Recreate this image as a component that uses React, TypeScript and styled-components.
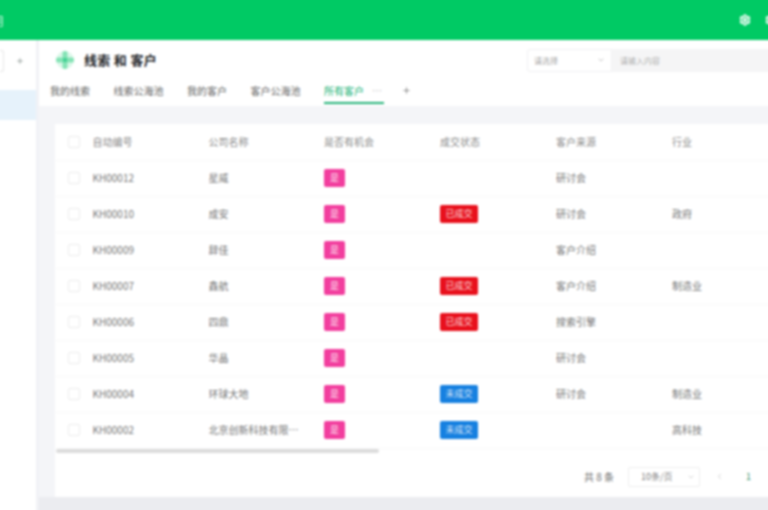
import React from "react";
import styled, { createGlobalStyle } from "styled-components";
import { Plus, Settings, ChevronDown, ChevronLeft } from "lucide-react";

const GlobalStyle = createGlobalStyle`
    html, body {
        margin: 0;
        padding: 0;
        width: 768px;
        height: 510px;
        overflow: hidden;
        background: #ffffff;
        font-family: "Noto Sans CJK SC", "Noto Sans", sans-serif;
    }
`;

// 4px larger than the window on each side so the blur has no pale edge
const Shell = styled.div`
    width: 776px;
    height: 518px;
    margin: -4px;
    display: flex;
    flex-direction: column;
    overflow: hidden;
    filter: blur(0.8px);
`;

const TopBar = styled.header`
    flex: 0 0 44px;
    box-sizing: border-box;
    padding: 4px 4px 0;
    background: #00ca64;
    display: flex;
    align-items: center;
    justify-content: space-between;
    color: #ffffff;
    overflow: hidden;
`;

const AppName = styled.span`
    margin-left: -8px;
    font-size: 12px;
    opacity: 0.8;
`;

const TopActions = styled.div`
    display: flex;
    align-items: center;
    gap: 14px;
    margin-right: -9px;
`;

const Body = styled.div`
    flex: 1;
    display: flex;
    min-height: 0;
`;

const Sidebar = styled.aside`
    flex: 0 0 43px;
    background: #ffffff;
    overflow: hidden;
    display: flex;
    flex-direction: column;
    padding-top: 10px;
    box-sizing: border-box;
    border-right: 3px solid #f1f2f6;
`;

const SideSearch = styled.div`
    height: 22px;
    padding-left: 4px;
    display: flex;
    align-items: center;
    color: #9aa3a0;
    margin-bottom: 18px;
`;

const SideInput = styled.div`
    width: 3px;
    height: 20px;
    border: 1px solid #e6e6e6;
    border-left: 0;
    border-radius: 0 3px 3px 0;
    margin-right: 12px;
`;

const SideItem = styled.div`
    height: 30px;
    background: #e6f2fb;
`;

const Main = styled.main`
    flex: 1;
    min-width: 0;
    display: flex;
    flex-direction: column;
    overflow: hidden;
    background: #f4f5f8;
`;

const PageHead = styled.div`
    flex: 0 0 66px;
    background: #ffffff;
    box-sizing: border-box;
    display: flex;
    flex-direction: column;
`;

const TitleRow = styled.div`
    height: 40px;
    display: flex;
    align-items: center;
    justify-content: space-between;
    padding-left: 15px;
`;

const TitleGroup = styled.div`
    display: flex;
    align-items: center;
    gap: 8px;
`;

const Title = styled.h1`
    margin: 0;
    font-size: 13px;
    line-height: 18px;
    font-weight: 700;
    letter-spacing: 0.3px;
    color: #26282c;
`;

const Filter = styled.div`
    display: flex;
    flex: 0 0 245px;
    height: 23px;
`;

const FilterSelect = styled.div`
    flex: 0 0 85px;
    box-sizing: border-box;
    display: flex;
    align-items: center;
    justify-content: space-between;
    padding: 0 6px;
    border: 1px solid #f0f0f2;
    border-radius: 3px 0 0 3px;
    font-size: 8px;
    color: #a8a8a8;
`;

const FilterInput = styled.div`
    flex: 1;
    display: flex;
    align-items: center;
    padding-left: 8px;
    background: #f5f5f6;
    font-size: 8px;
    color: #b0b0b0;
`;

const Tabs = styled.nav`
    display: flex;
    align-items: flex-start;
    gap: 23.5px;
    padding-left: 11px;
    height: 26px;
`;

const Tab = styled.div<{ $active?: boolean }>`
    height: 24px;
    box-sizing: border-box;
    padding-top: 4px;
    display: flex;
    gap: 6px;
    font-size: 10px;
    line-height: 14px;
    color: ${(props) => (props.$active ? "#22b277" : "#686868")};
    border-bottom: 2px solid ${(props) => (props.$active ? "#22b277" : "transparent")};
`;

const TabExtra = styled.span`
    color: #c0c0c0;
    width: 14px;
    text-align: center;
`;

const TabAdd = styled.div`
    color: #8a8a8a;
    padding-top: 6px;
    margin-left: -6px;
    line-height: 0;
`;

const Content = styled.div`
    flex: 1;
    min-height: 0;
    padding: 18px 0 0 16px;
`;

const Card = styled.section`
    width: 860px;
    height: 373px;
    background: #ffffff;
    box-sizing: border-box;
    padding-left: 1px;
`;

const Table = styled.table`
    border-collapse: collapse;
    table-layout: fixed;
    width: 845px;
`;

const Row = styled.tr`
    height: 36px;
    border-bottom: 1px solid #f8f8f9;
`;

const HeadCell = styled.th`
    padding: 0;
    font-size: 10px;
    font-weight: 400;
    text-align: left;
    color: #8c8c8c;
`;

const Cell = styled.td`
    padding: 0 20px 1px 0;
    font-size: 10px;
    color: #777777;
    white-space: nowrap;
    overflow: hidden;
    text-overflow: ellipsis;
`;

const CheckCell = styled.div`
    width: 10px;
    height: 10px;
    margin-left: 12px;
    border: 1px solid #ececec;
    border-radius: 2px;
`;

const Tag = styled.span<{ $tone: "pink" | "red" | "blue" }>`
    display: inline-flex;
    align-items: center;
    justify-content: center;
    height: 18px;
    padding: 0 ${(props) => (props.$tone === "pink" ? 6 : 5.5)}px;
    border-radius: 2px;
    font-size: 9px;
    color: rgba(255, 255, 255, 0.85);
    background: ${(props) =>
        props.$tone === "pink" ? "#f23e9e" : props.$tone === "red" ? "#e8101c" : "#1680e0"};
    vertical-align: middle;
`;

const Scrollbar = styled.div`
    width: 323px;
    height: 4px;
    border-radius: 2px;
    background: #dcdcdc;
`;

const Pager = styled.div`
    width: 695px;
    display: flex;
    align-items: center;
    justify-content: flex-end;
    gap: 14px;
    margin-top: 14px;
    font-size: 10px;
    color: #6f6f6f;
`;

const PageSize = styled.div`
    width: 72px;
    height: 20px;
    box-sizing: border-box;
    display: flex;
    align-items: center;
    justify-content: space-between;
    padding: 0 4px 0 12px;
    border: 1px solid #eeeeee;
    border-radius: 2px;
    font-size: 9px;
    color: #808080;
`;

const PagerNav = styled.span<{ $current?: boolean }>`
    display: inline-flex;
    margin-left: ${(props) => (props.$current ? 8 : 1)}px;
    font-size: 9px;
    color: ${(props) => (props.$current ? "#2f8f68" : "#c6c6c6")};
`;

const Footer = styled.div`
    height: 17px;
    background: #ebecf0;
    margin-left: -16px;
`;

type Customer = {
    id: string;
    name: string;
    status?: "已成交" | "未成交";
    source?: string;
    industry?: string;
};

const customers: Customer[] = [
    { id: "KH00012", name: "星威", source: "研讨会" },
    { id: "KH00010", name: "成安", status: "已成交", source: "研讨会", industry: "政府" },
    { id: "KH00009", name: "辞佳", source: "客户介绍" },
    { id: "KH00007", name: "鑫航", status: "已成交", source: "客户介绍", industry: "制造业" },
    { id: "KH00006", name: "四鼎", status: "已成交", source: "搜索引擎" },
    { id: "KH00005", name: "华晶", source: "研讨会" },
    { id: "KH00004", name: "环球大地", status: "未成交", source: "研讨会", industry: "制造业" },
    { id: "KH00002", name: "北京创新科技有限公司", status: "未成交", industry: "高科技" },
];

const tabs = ["我的线索", "线索公海池", "我的客户", "客户公海池"];
const columns = ["自动编号", "公司名称", "是否有机会", "成交状态", "客户来源", "行业"];

const Logo = () => (
    <svg width="22" height="22" viewBox="0 0 22 22">
        <circle cx="11" cy="11" r="9" fill="#dcf7e9" />
        <rect x="8.5" y="2" width="5" height="18" rx="2" fill="#84e3b5" />
        <rect x="2" y="8.5" width="18" height="5" rx="2" fill="#84e3b5" />
        <rect x="9" y="9" width="4" height="4" fill="#45d295" />
    </svg>
);

const App: React.FC = () => (
    <Shell>
        <GlobalStyle />
        <TopBar>
            <AppName>用</AppName>
            <TopActions>
                <Settings size={12} strokeWidth={3} />
                <Settings size={12} strokeWidth={3} />
            </TopActions>
        </TopBar>
        <Body>
            <Sidebar>
                <SideSearch>
                    <SideInput />
                    <Plus size={8} strokeWidth={3} />
                </SideSearch>
                <SideItem />
            </Sidebar>
            <Main>
                <PageHead>
                    <TitleRow>
                        <TitleGroup>
                            <Logo />
                            <Title>线索 和 客户</Title>
                        </TitleGroup>
                        <Filter>
                            <FilterSelect>
                                请选择
                                <ChevronDown size={8} />
                            </FilterSelect>
                            <FilterInput>请输入内容</FilterInput>
                        </Filter>
                    </TitleRow>
                    <Tabs>
                        {tabs.map((tab) => (
                            <Tab key={tab}>{tab}</Tab>
                        ))}
                        <Tab $active>
                            所有客户
                            <TabExtra>⋯</TabExtra>
                        </Tab>
                        <TabAdd>
                            <Plus size={9} strokeWidth={2.5} />
                        </TabAdd>
                    </Tabs>
                </PageHead>
                <Content>
                    <Card>
                        <Table>
                            <colgroup>
                                <col width="36.5" />
                                <col width="116" />
                                <col width="115.5" />
                                <col width="116" />
                                <col width="116" />
                                <col width="116" />
                                <col width="229" />
                            </colgroup>
                            <thead>
                                <Row>
                                    <HeadCell>
                                        <CheckCell />
                                    </HeadCell>
                                    {columns.map((column) => (
                                        <HeadCell key={column}>{column}</HeadCell>
                                    ))}
                                    <HeadCell />
                                </Row>
                            </thead>
                            <tbody>
                                {customers.map((customer) => (
                                    <Row key={customer.id}>
                                        <Cell>
                                            <CheckCell />
                                        </Cell>
                                        <Cell>{customer.id}</Cell>
                                        <Cell>{customer.name}</Cell>
                                        <Cell>
                                            <Tag $tone="pink">是</Tag>
                                        </Cell>
                                        <Cell>
                                            {customer.status && (
                                                <Tag $tone={customer.status === "已成交" ? "red" : "blue"}>
                                                    {customer.status}
                                                </Tag>
                                            )}
                                        </Cell>
                                        <Cell>{customer.source}</Cell>
                                        <Cell>{customer.industry}</Cell>
                                        <Cell />
                                    </Row>
                                ))}
                            </tbody>
                        </Table>
                        <Scrollbar />
                        <Pager>
                            <span>共 8 条</span>
                            <PageSize>
                                10条/页
                                <ChevronDown size={8} color="#c0c0c0" />
                            </PageSize>
                            <PagerNav>
                                <ChevronLeft size={9} />
                            </PagerNav>
                            <PagerNav $current>1</PagerNav>
                        </Pager>
                    </Card>
                    <Footer />
                </Content>
            </Main>
        </Body>
    </Shell>
);

export default App;
